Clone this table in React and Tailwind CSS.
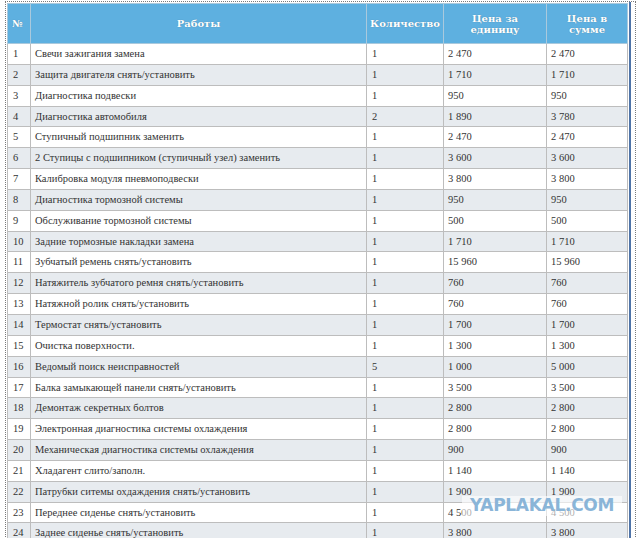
import React from 'react';

const rows = [
    ['1', 'Свечи зажигания замена', '1', '2 470', '2 470'],
    ['2', 'Защита двигателя снять/установить', '1', '1 710', '1 710'],
    ['3', 'Диагностика подвески', '1', '950', '950'],
    ['4', 'Диагностика автомобиля', '2', '1 890', '3 780'],
    ['5', 'Ступичный подшипник заменить', '1', '2 470', '2 470'],
    ['6', '2 Ступицы с подшипником (ступичный узел) заменить', '1', '3 600', '3 600'],
    ['7', 'Калибровка модуля пневмоподвески', '1', '3 800', '3 800'],
    ['8', 'Диагностика тормозной системы', '1', '950', '950'],
    ['9', 'Обслуживание тормозной системы', '1', '500', '500'],
    ['10', 'Задние тормозные накладки замена', '1', '1 710', '1 710'],
    ['11', 'Зубчатый ремень снять/установить', '1', '15 960', '15 960'],
    ['12', 'Натяжитель зубчатого ремня снять/установить', '1', '760', '760'],
    ['13', 'Натяжной ролик снять/установить', '1', '760', '760'],
    ['14', 'Термостат снять/установить', '1', '1 700', '1 700'],
    ['15', 'Очистка поверхности.', '1', '1 300', '1 300'],
    ['16', 'Ведомый поиск неисправностей', '5', '1 000', '5 000'],
    ['17', 'Балка замыкающей панели снять/установить', '1', '3 500', '3 500'],
    ['18', 'Демонтаж секретных болтов', '1', '2 800', '2 800'],
    ['19', 'Электронная диагностика системы охлаждения', '1', '2 800', '2 800'],
    ['20', 'Механическая диагностика системы охлаждения', '1', '900', '900'],
    ['21', 'Хладагент слито/заполн.', '1', '1 140', '1 140'],
    ['22', 'Патрубки ситемы охдаждения снять/установить', '1', '1 900', '1 900'],
    ['23', 'Переднее сиденье снять/установить', '1', '4 500', '4 500'],
    ['24', 'Заднее сиденье снять/установить', '1', '3 800', '3 800'],
];

export default function App() {
    return (
        <div className="w-[640px] h-[538px] overflow-hidden bg-white relative font-['Liberation_Serif',serif]">
            <div className="ml-[5px] mr-[4px] mt-[1px] border-l border-t border-r border-dotted border-[#7a7a7a] h-[600px] pl-[1px] pr-[4px]">
                <div className="border-r-2 border-[#4f74a8] h-full pr-[2px] pt-[1px]">
                    <table className="w-[620px] border-collapse table-fixed text-[10.5px] text-[#333]">
                        <colgroup>
                            <col className="w-[23px]" />
                            <col className="w-[336px]" />
                            <col className="w-[77px]" />
                            <col className="w-[103px]" />
                            <col className="w-[81px]" />
                        </colgroup>
                        <thead>
                            <tr className="h-[40px] bg-[#5eb0e0] text-white font-['DejaVu_Serif',serif] font-bold text-[10px] leading-[11px] [text-shadow:0_0_1px_rgba(0,0,0,0.3)]">
                                <th className="border border-[#a9c9dd] text-left pl-[4px]">№</th>
                                <th className="border border-[#a9c9dd] text-center">Работы</th>
                                <th className="border border-[#a9c9dd] text-center">Количество</th>
                                <th className="border border-[#a9c9dd] text-center">Цена за<br />единицу</th>
                                <th className="border border-[#a9c9dd] text-center">Цена в<br />сумме</th>
                            </tr>
                        </thead>
                        <tbody>
                            {rows.map((r, i) => (
                                <tr key={i} className={i % 2 === 0 ? 'h-[20.85px] bg-white' : 'h-[20.85px] bg-[#e7ebef]'}>
                                    <td className="border border-[#bdbdbd] pl-[5px] whitespace-nowrap">{r[0]}</td>
                                    <td className="border border-[#bdbdbd] pl-[4px] whitespace-nowrap">{r[1]}</td>
                                    <td className="border border-[#bdbdbd] pl-[5px]">{r[2]}</td>
                                    <td className="border border-[#bdbdbd] pl-[4px] whitespace-nowrap">{r[3]}</td>
                                    <td className="border border-[#bdbdbd] pl-[4px] whitespace-nowrap">{r[4]}</td>
                                </tr>
                            ))}
                        </tbody>
                    </table>
                </div>
            </div>
            {/* watermark */}
            <div className="absolute left-[462px] top-[496px] w-[160px] h-[20px] bg-white/60 flex items-center justify-center">
                <span className="font-['DejaVu_Sans',sans-serif] font-black text-[17px] tracking-[-0.3px] text-[#8ab5d8]">YAPLAKAL.COM</span>
            </div>
        </div>
    );
}
